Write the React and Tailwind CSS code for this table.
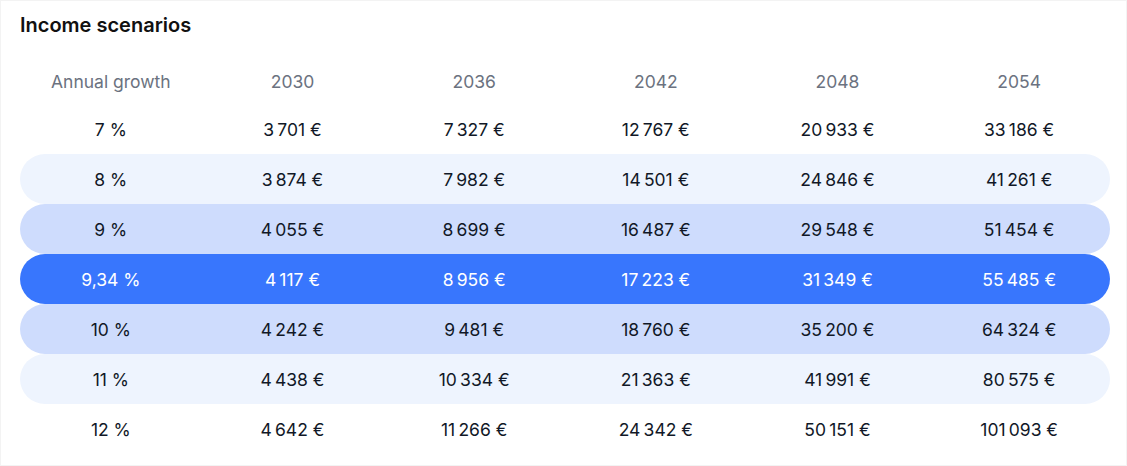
const years = ["2030", "2036", "2042", "2048", "2054"];

const rows = [
  { rate: "7 %", values: [3701, 7327, 12767, 20933, 33186], tone: "none" },
  { rate: "8 %", values: [3874, 7982, 14501, 24846, 41261], tone: "light" },
  { rate: "9 %", values: [4055, 8699, 16487, 29548, 51454], tone: "mid" },
  { rate: "9,34 %", values: [4117, 8956, 17223, 31349, 55485], tone: "active" },
  { rate: "10 %", values: [4242, 9481, 18760, 35200, 64324], tone: "mid" },
  { rate: "11 %", values: [4438, 10334, 21363, 41991, 80575], tone: "light" },
  { rate: "12 %", values: [4642, 11266, 24342, 50151, 101093], tone: "none" },
];

const toneClass = {
  none: "text-[#111827]",
  light: "bg-[#eef4fe] text-[#111827]",
  mid: "bg-[#cedcfd] text-[#111827]",
  active: "bg-[#3876fd] text-white",
};

function euro(n) {
  return n.toString().replace(/\B(?=(\d{3})+(?!\d))/g, "\u202F") + "\u00A0€";
}

export default function App() {
  return (
    <div
      className="w-[1127px] h-[466px] bg-white border border-[#f3f3f3] px-[19px] pt-[10px]"
      style={{ fontFamily: "Inter, 'Noto Sans', sans-serif" }}
    >
      <h2 className="text-[20px] leading-7 font-semibold text-[#111111]">Income scenarios</h2>
      <div className="mt-[18px] w-[1090px]">
        <div className="grid grid-cols-6 h-[47px] pt-1 items-center text-[17.5px] text-[#6b7280]">
          <div className="text-center">Annual growth</div>
          {years.map((y) => (
            <div key={y} className="text-center">{y}</div>
          ))}
        </div>
        {rows.map((r) => (
          <div
            key={r.rate}
            className={`grid grid-cols-6 h-[50px] pt-[2px] items-center rounded-full text-[17.5px] ${toneClass[r.tone]}`}
          >
            <div className="text-center">{r.rate}</div>
            {r.values.map((v, i) => (
              <div key={i} className="text-center">{euro(v)}</div>
            ))}
          </div>
        ))}
      </div>
    </div>
  );
}
